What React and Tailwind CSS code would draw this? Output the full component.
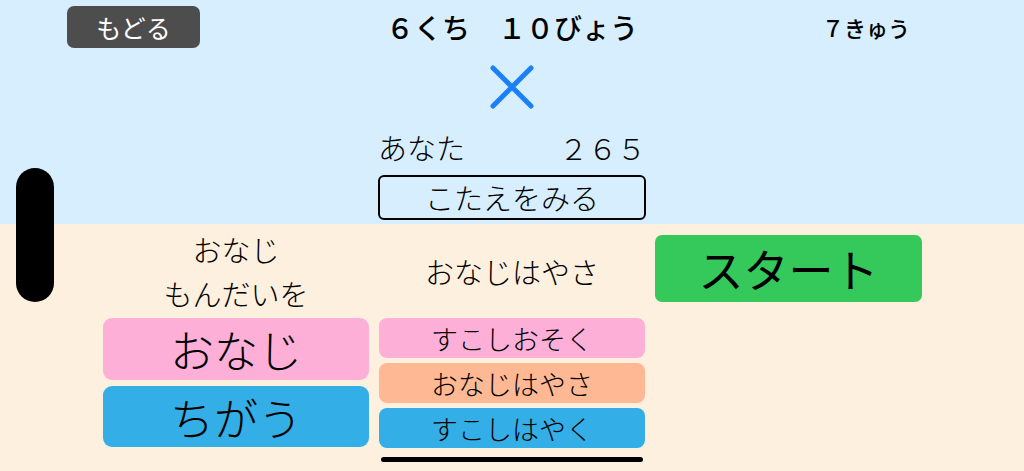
import React from 'react';

const font = "font-['Noto_Sans_CJK_JP','Noto_Sans',sans-serif]";

function CrossMark() {
  return (
    <svg width="46" height="46" viewBox="0 0 46 46" fill="none">
      <path d="M4 4 L42 42 M42 4 L4 42" stroke="#1a7ff8" strokeWidth="5" strokeLinecap="round" />
    </svg>
  );
}

export default function App() {
  return (
    <div className={`relative w-[1024px] h-[471px] overflow-hidden flex flex-col text-black font-light ${font}`}>
      {/* upper panel: header, result and answer button */}
      <div className="h-[224px] bg-[#d7eefe] flex flex-col items-center">
        <div className="w-full grid grid-cols-[1fr_auto_1fr] items-center pt-[6px]">
          <div className="pl-[67px]">
            <button className="w-[133px] h-[42px] rounded-[7px] bg-[#4d4d4d] text-white text-[25px] font-normal leading-none">
              もどる
            </button>
          </div>
          <div className="text-[28px] font-medium leading-none">６くち　１０びょう</div>
          <div className="pr-[114px] text-right text-[22px] font-medium leading-none">７きゅう</div>
        </div>
        <div className="mt-[16px]">
          <CrossMark />
        </div>
        <div className="mt-[19px] w-[268px] flex justify-between text-[29px] leading-[36px]">
          <span>あなた</span>
          <span>２６５</span>
        </div>
        <button className="mt-[10px] w-[268px] h-[45px] border-2 border-black rounded-[6px] text-[29px] leading-none">
          こたえをみる
        </button>
      </div>

      {/* lower panel: choices */}
      <div className="flex-1 bg-[#fef0df]">
        <div className="ml-[103px] grid grid-cols-[266px_266px_267px] gap-x-[10px]">
          <div className="flex flex-col">
            <div className="h-[94px] flex flex-col items-center justify-center text-[29px] leading-[44px]">
              <span>おなじ</span>
              <span>もんだいを</span>
            </div>
            <div className="flex flex-col gap-[6px]">
              <button className="h-[62px] rounded-[9px] bg-[#feafd7] text-[44px] leading-none">おなじ</button>
              <button className="h-[61px] rounded-[9px] bg-[#33aee6] text-[44px] leading-none">ちがう</button>
            </div>
          </div>

          <div className="flex flex-col">
            <div className="h-[94px] flex items-center justify-center text-[29px] leading-none">
              おなじはやさ
            </div>
            <div className="flex flex-col gap-[5px]">
              <button className="h-[40px] rounded-[8px] bg-[#feafd7] text-[27px] leading-none">すこしおそく</button>
              <button className="h-[40px] rounded-[8px] bg-[#feb894] text-[27px] leading-none">おなじはやさ</button>
              <button className="h-[40px] rounded-[8px] bg-[#33aee6] text-[27px] leading-none">すこしはやく</button>
            </div>
            <div className="mt-[9px] mx-[2px] h-[5px] rounded-full bg-black" />
          </div>

          <div className="pt-[11px]">
            <button className="w-full h-[67px] rounded-[7px] bg-[#35c85a] text-[45px] font-normal leading-none">スタート</button>
          </div>
        </div>
      </div>

      {/* sensor housing on the left edge */}
      <div className="absolute left-[16px] top-[168px] w-[38px] h-[134px] rounded-full bg-black" />
    </div>
  );
}
